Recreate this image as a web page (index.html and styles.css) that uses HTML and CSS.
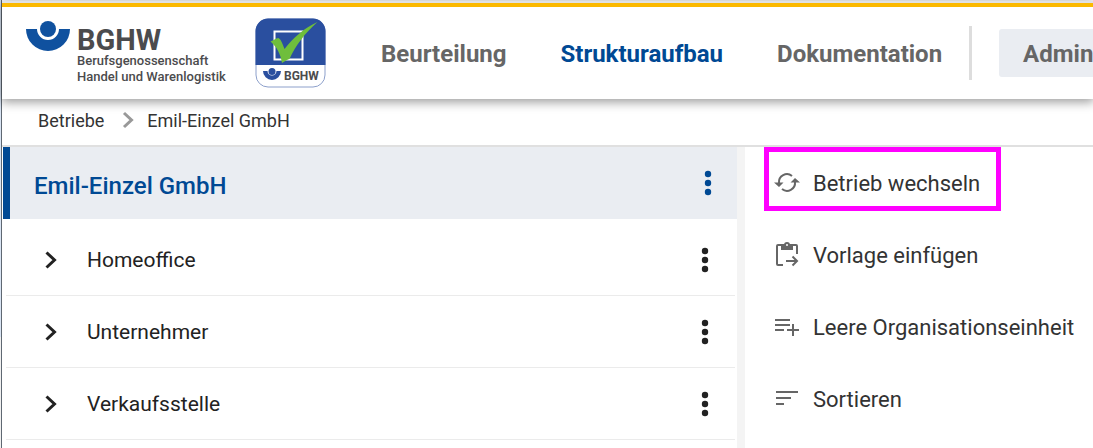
FILE: index.html
```html
<!DOCTYPE html>
<html lang="de">
<head>
  <meta charset="utf-8">
  <title>Strukturaufbau - BGHW</title>
  <link rel="stylesheet" href="styles.css">
</head>
<body>
  <div class="app">
    <header class="header">
      <a class="logo" href="#">
        <svg class="logo-mark" width="44" height="30" viewBox="0 0 44 30">
          <path fill="#0f519f" d="M0 8h11a11 11 0 0 0 22 0h11a22 22 0 0 1-44 0z"/>
          <circle fill="#0f519f" cx="22" cy="8" r="8"/>
        </svg>
        <span class="logo-text">
          <strong>BGHW</strong>
          <span>Berufsgenossenschaft</span>
          <span>Handel und Warenlogistik</span>
        </span>
      </a>
      <a class="app-logo" href="#">
        <svg width="71" height="70" viewBox="0 0 71 70">
          <rect x="1" y="1" width="69" height="68" rx="12" fill="#fff" stroke="#8da0cb"/>
          <path fill="#2a4f9f" d="M.5 47V13A12.500 12.500 0 0 1 13 .5h45A12.500 12.500 0 0 1 70.500 13v34z"/>
          <rect x="19.500" y="13.500" width="28" height="28" fill="none" stroke="#fff" stroke-width="2"/>
          <path fill="#6fbe3c" d="M15.500 23.500c3-1 5-3 8-3.500 3 2 4 6 6 11C38 20 49 10 62.500 4 50 15 41 27 34.500 41c-3 1-4.500 2-7.500 4-1.500-9-5-16-11.500-21.500z"/>
          <path fill="#2a4f9f" d="M8 53h4.500a4.500 4.500 0 0 0 9 0H26a9 9 0 0 1-18 0z"/>
          <circle fill="#2a4f9f" cx="17" cy="53.500" r="3.500"/>
          <text class="app-logo-text" x="29" y="62">BGHW</text>
        </svg>
      </a>
      <nav class="nav">
        <a href="#">Beurteilung</a>
        <a href="#" class="active">Strukturaufbau</a>
        <a href="#">Dokumentation</a>
      </nav>
      <div class="divider"></div>
      <button class="admin-btn">Admin</button>
    </header>

    <nav class="breadcrumb">
      <a href="#">Betriebe</a>
      <svg width="12" height="18" viewBox="0 0 12 18">
        <path fill="none" stroke="#999" stroke-width="3" d="M2 2l7.500 7L2 16"/>
      </svg>
      <a href="#">Emil-Einzel GmbH</a>
    </nav>

    <main class="content">
      <section class="tree">
        <div class="tree-root">
          <h1>Emil-Einzel GmbH</h1>
          <button class="more" aria-label="Menü">
            <svg width="8" height="26" viewBox="0 0 8 26"><circle cx="4" cy="4" r="3.200"/><circle cx="4" cy="13" r="3.200"/><circle cx="4" cy="22" r="3.200"/></svg>
          </button>
        </div>
        <ul class="tree-list">
          <li class="tree-item">
            <button class="expand" aria-label="Aufklappen">
              <svg width="12" height="18" viewBox="0 0 12 18"><path d="M1.500 1.500L9.500 9l-8 7.500"/></svg>
            </button>
            <span>Homeoffice</span>
            <button class="more" aria-label="Menü">
              <svg width="8" height="26" viewBox="0 0 8 26"><circle cx="4" cy="4" r="3.200"/><circle cx="4" cy="13" r="3.200"/><circle cx="4" cy="22" r="3.200"/></svg>
            </button>
          </li>
          <li class="tree-item">
            <button class="expand" aria-label="Aufklappen">
              <svg width="12" height="18" viewBox="0 0 12 18"><path d="M1.500 1.500L9.500 9l-8 7.500"/></svg>
            </button>
            <span>Unternehmer</span>
            <button class="more" aria-label="Menü">
              <svg width="8" height="26" viewBox="0 0 8 26"><circle cx="4" cy="4" r="3.200"/><circle cx="4" cy="13" r="3.200"/><circle cx="4" cy="22" r="3.200"/></svg>
            </button>
          </li>
          <li class="tree-item">
            <button class="expand" aria-label="Aufklappen">
              <svg width="12" height="18" viewBox="0 0 12 18"><path d="M1.500 1.500L9.500 9l-8 7.500"/></svg>
            </button>
            <span>Verkaufsstelle</span>
            <button class="more" aria-label="Menü">
              <svg width="8" height="26" viewBox="0 0 8 26"><circle cx="4" cy="4" r="3.200"/><circle cx="4" cy="13" r="3.200"/><circle cx="4" cy="22" r="3.200"/></svg>
            </button>
          </li>
        </ul>
      </section>

      <div class="splitter"></div>

      <aside class="actions">
        <button class="action highlight">
          <svg width="26" height="26" viewBox="0 0 26 26">
            <path fill="none" stroke="#666" stroke-width="2" d="M5 13a8 8 0 0 1 13-7M21 12a8 8 0 0 1-13 7"/>
            <path fill="#666" d="M0 12.500h9.500L5 17zM16.500 12.500H26L21 8z"/>
          </svg>
          Betrieb wechseln
        </button>
        <button class="action">
          <svg width="26" height="26" viewBox="0 0 26 26">
            <path fill="none" stroke="#666" stroke-width="2" d="M9 23H4a1 1 0 0 1-1-1V4a1 1 0 0 1 1-1h18a1 1 0 0 1 1 1v8M12 19h11M18.500 14.500L23 19l-4.500 4.500"/>
            <path fill="#666" d="M7 3h3a3 3 0 0 1 6 0h3v5H7z"/>
            <circle fill="#fff" cx="13" cy="3" r="1"/>
          </svg>
          Vorlage einfügen
        </button>
        <button class="action">
          <svg width="26" height="26" viewBox="0 0 26 26">
            <path fill="none" stroke="#666" stroke-width="2" d="M1 6h15M1 11h15M1 16h9M13 16h12M19 10v12"/>
          </svg>
          Leere Organisationseinheit
        </button>
        <button class="action">
          <svg width="26" height="26" viewBox="0 0 26 26">
            <path fill="none" stroke="#666" stroke-width="2" d="M2 6h22M2 12h15M2 18h8"/>
          </svg>
          Sortieren
        </button>
      </aside>
    </main>
  </div>
</body>
</html>
```
FILE: styles.css
```css
* {
  box-sizing: border-box;
}
body {
  margin: 0;
  min-height: 100vh;
  overflow: hidden;
  padding-left: 1px;
  background: linear-gradient(#d9e4f3 337px, #f0f0f0 337px);
  font-family: Roboto, sans-serif;
  color: #333;
}
a {
  color: inherit;
  text-decoration: none;
}
button {
  padding: 0;
  border: none;
  background: none;
  font-family: inherit;
  color: inherit;
  cursor: pointer;
}
svg {
  display: block;
  flex: none;
}
.app {
  display: flex;
  flex-direction: column;
  min-height: 100vh;
  padding-top: 1px;
  border-left: 1px solid #5f6872;
  background: #fff;
}

/* header */
.header {
  position: relative;
  display: flex;
  align-items: center;
  height: 98px;
  padding: 4px 0 0 24px;
  border-top: 2px solid #dfe1e4;
  background: linear-gradient(#fbb900 4px, #fff 4px);
  box-shadow: 0 2px 10px 1px rgba(0, 0, 0, 0.4);
}
.logo {
  display: flex;
  flex: none;
  gap: 7px;
  width: 229px;
  color: #4b4b4d;
}
.logo-text {
  display: flex;
  flex-direction: column;
  padding-top: 6px;
  font-size: 13px;
  font-weight: 500;
  line-height: 16px;
  white-space: nowrap;
}
.logo-text strong {
  font-size: 29px;
  line-height: 26px;
}
.app-logo {
  flex: none;
}
.app-logo-text {
  font-size: 12px;
  font-weight: 700;
  fill: #4b4b4d;
}
.nav {
  display: flex;
  flex: none;
  gap: 54px;
  margin: 0 27px 0 55px;
  padding-top: 2px;
  font-size: 24px;
  font-weight: 700;
  color: #666;
}
.nav .active {
  color: #004994;
}
.divider {
  flex: none;
  width: 3px;
  height: 54px;
  margin-right: 27px;
  background: #ddd;
}
.admin-btn {
  flex: none;
  height: 48px;
  padding: 2px 24px 0;
  border-radius: 3px;
  background: #eaedf2;
  font-size: 24px;
  font-weight: 700;
  color: #666;
}

/* breadcrumb */
.breadcrumb {
  display: flex;
  align-items: center;
  gap: 13px;
  height: 48px;
  padding: 0 36px 4px;
  border-bottom: 2px solid #e0e0e0;
  font-size: 18px;
}
.breadcrumb svg {
  margin-left: 5px;
}

/* content */
.content {
  display: grid;
  flex: 1;
  grid-template-columns: minmax(0, 735fr) 8px minmax(0, 348fr);
}
.tree {
  padding-left: 1px;
}
.tree-root {
  display: flex;
  align-items: center;
  justify-content: space-between;
  height: 72px;
  padding: 0 25px 0 24px;
  border-left: 7px solid #004994;
  background: #eaedf2;
  color: #004994;
}
.tree-root h1 {
  margin: 6px 0 0;
  font-size: 24px;
  font-weight: 500;
}
.more {
  fill: currentColor;
}
.tree-list {
  margin: 5px 2px 0 3px;
  padding: 0;
  list-style: none;
}
.tree-item {
  display: flex;
  align-items: center;
  height: 72px;
  padding: 0 26px 0 39px;
  border-bottom: 1px solid #ebebeb;
  font-size: 21px;
  color: #222;
}
.tree-item span {
  flex: 1;
  margin-left: 30px;
}
.expand {
  fill: none;
  stroke: #222;
  stroke-width: 3;
}
.splitter {
  background: #f4f4f4;
}
.actions {
  display: flex;
  flex-direction: column;
  align-items: flex-start;
  padding-left: 19px;
}
.action {
  position: relative;
  display: flex;
  align-items: center;
  gap: 13px;
  height: 72px;
  padding: 0 21px 0 10px;
  font-size: 22px;
  white-space: nowrap;
}
.highlight::after {
  content: "";
  position: absolute;
  inset: 0 0 8px;
  border: 5px solid #f0f;
}
```
